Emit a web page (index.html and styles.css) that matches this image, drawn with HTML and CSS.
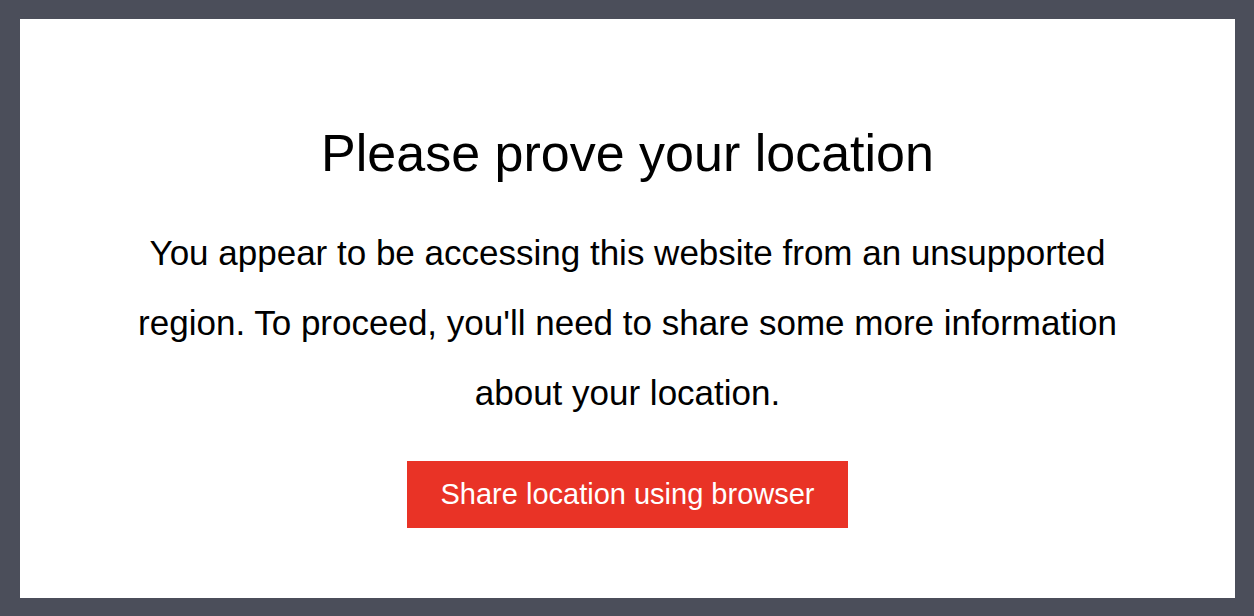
FILE: index.html
```html
<!DOCTYPE html>
<html lang="en">
<head>
<meta charset="UTF-8">
<meta name="viewport" content="width=device-width, initial-scale=1.0">
<title>Please prove your location</title>
<link rel="stylesheet" href="styles.css">
</head>
<body>
    <div class="modal">
        <h1 class="modal-title">Please prove your location</h1>
        <p class="modal-text">You appear to be accessing this website from an unsupported region. To proceed, you'll need to share some more information about your location.</p>
        <button type="button" class="share-btn">Share location using browser</button>
    </div>
</body>
</html>
```

FILE: styles.css
```css
html, body {
    height: 100%;
}
body {
    margin: 0;
    padding: 19px 19px 18px 20px;
    box-sizing: border-box;
    background-color: #4b4e5a;
    font-family: "Liberation Sans", Arial, sans-serif;
}
.modal {
    background-color: #fff;
    height: 100%;
    box-sizing: border-box;
    padding-top: 105px;
    display: flex;
    flex-direction: column;
    align-items: center;
}
.modal-title {
    margin: 0;
    font-size: 52px;
    font-weight: normal;
    line-height: 1.15;
    color: #000;
}
.modal-text {
    margin: 34px 0 33px;
    max-width: 1040px;
    font-size: 35px;
    line-height: 2;
    text-align: center;
    color: #000;
}
.share-btn {
    font-family: inherit;
    font-size: 29px;
    line-height: 1.15;
    white-space: nowrap;
    color: #fff;
    background-color: #e93326;
    border: none;
    border-radius: 0;
    padding: 17px 34px;
    cursor: pointer;
}
```
